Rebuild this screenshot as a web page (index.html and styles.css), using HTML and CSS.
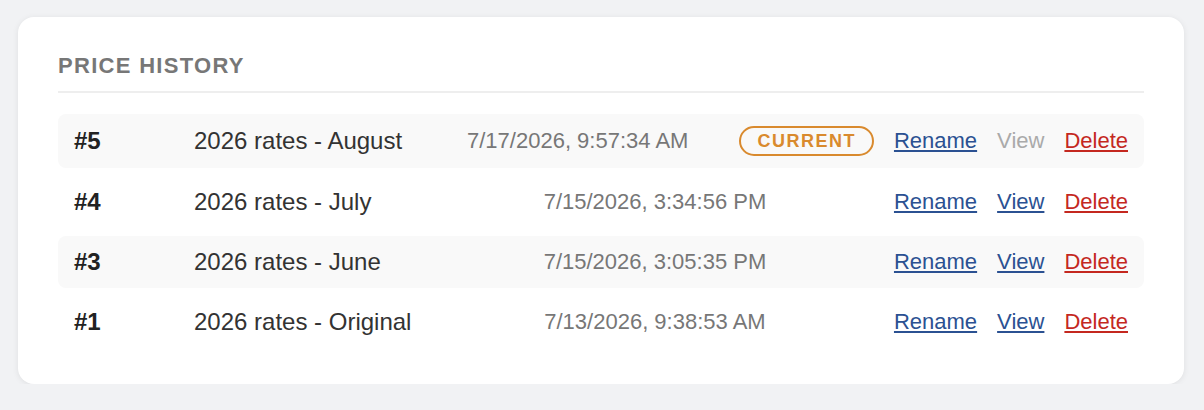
FILE: index.html
```html
<!DOCTYPE html>
<html lang="en">

<head>
  <meta charset="UTF-8">
  <meta name="viewport" content="width=device-width, initial-scale=1.0">
  <title>Price History</title>
  <link rel="stylesheet" href="styles.css">
</head>

<body>
  <section class="card">
    <h2 class="cardTitle">Price History</h2>
    <div class="historyList">
      <div class="historyRow">
        <span class="version">#5</span>
        <span class="name">2026 rates - August</span>
        <span class="date">7/17/2026, 9:57:34 AM</span>
        <span class="badge">CURRENT</span>
        <div class="actions">
          <a href="#" class="link">Rename</a>
          <span class="link disabled">View</span>
          <a href="#" class="link danger">Delete</a>
        </div>
      </div>
      <div class="historyRow">
        <span class="version">#4</span>
        <span class="name">2026 rates - July</span>
        <span class="date">7/15/2026, 3:34:56 PM</span>
        <div class="actions">
          <a href="#" class="link">Rename</a>
          <a href="#" class="link">View</a>
          <a href="#" class="link danger">Delete</a>
        </div>
      </div>
      <div class="historyRow">
        <span class="version">#3</span>
        <span class="name">2026 rates - June</span>
        <span class="date">7/15/2026, 3:05:35 PM</span>
        <div class="actions">
          <a href="#" class="link">Rename</a>
          <a href="#" class="link">View</a>
          <a href="#" class="link danger">Delete</a>
        </div>
      </div>
      <div class="historyRow">
        <span class="version">#1</span>
        <span class="name">2026 rates - Original</span>
        <span class="date">7/13/2026, 9:38:53 AM</span>
        <div class="actions">
          <a href="#" class="link">Rename</a>
          <a href="#" class="link">View</a>
          <a href="#" class="link danger">Delete</a>
        </div>
      </div>
    </div>
  </section>
</body>

</html>
```

FILE: styles.css
```css
html,
body {
  font-family: "Liberation Sans", Arial, sans-serif;
  background-color: #f1f2f4;
  margin: 0;
}

body {
  padding: 17px 20px 0 18px;
}

.card {
  background-color: #fff;
  border-radius: 16px;
  box-shadow: 0 1px 6px rgba(0, 0, 0, 0.08);
  padding: 36px 40px 36px 40px;
}

.cardTitle {
  margin: 0 0 21px;
  padding-bottom: 12px;
  border-bottom: 2px solid #eeeeee;
  font-size: 22px;
  font-weight: bold;
  letter-spacing: 1.3px;
  text-transform: uppercase;
  color: #777;
}

.historyList {
  display: flex;
  flex-direction: column;
  gap: 8px;
}

.historyRow {
  display: flex;
  align-items: center;
  gap: 20px;
  min-height: 28px;
  padding: 12px 16px;
  border-radius: 8px;
  font-size: 22px;
}

.historyRow:nth-child(odd) {
  background-color: #f9f9f9;
}

.version {
  width: 100px;
  font-size: 24px;
  font-weight: bold;
  color: #222;
}

.name {
  width: 222px;
  font-size: 24px;
  color: #333;
}

.date {
  flex: 1;
  text-align: center;
  color: #777;
}

.badge {
  box-sizing: border-box;
  height: 30px;
  line-height: 26px;
  padding: 0 16px;
  border: 2px solid #d98a2e;
  border-radius: 15px;
  font-size: 18px;
  font-weight: bold;
  letter-spacing: 1.5px;
  color: #d98a2e;
}

.actions {
  display: flex;
  gap: 20px;
}

.link {
  color: #2b5192;
  text-decoration: underline;
}

.link.danger {
  color: #c4281f;
}

.link.disabled {
  color: #aaa;
  text-decoration: none;
}
```
